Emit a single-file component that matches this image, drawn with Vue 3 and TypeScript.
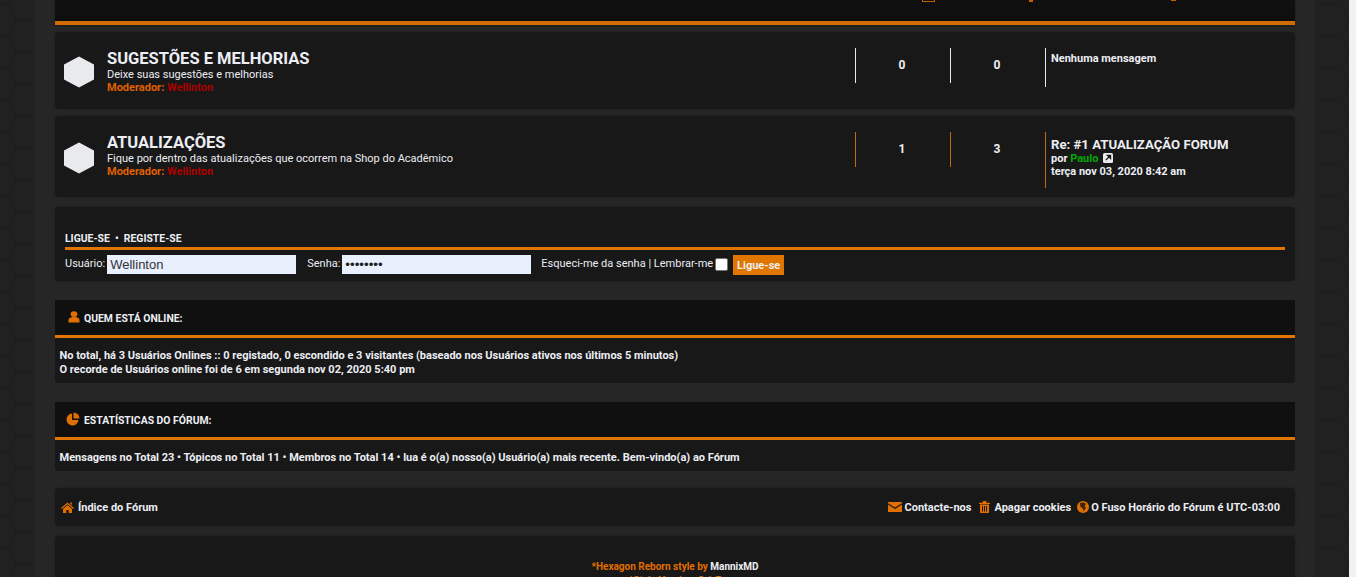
<script setup lang="ts">
const hexTile = "url(\"data:image/svg+xml,%3Csvg xmlns='http://www.w3.org/2000/svg' width='55.56' height='32' viewBox='0 0 55.56 32'%3E%3Cpath d='M16 20.5 H36 M36 20.5 L44 4.5 M36 20.5 L44 36.5 M36 -11.5 L44 4.5 M44 4.5 H56 M0 4.5 H8.44 M8.44 4.5 L16 20.5 M8.44 36.5 L16 20.5 M8.44 4.5 L16 -11.5' fill='none' stroke='%231c1c1c' stroke-width='1'/%3E%3C/svg%3E\")";
const forums = [
  {
    title: "SUGESTÕES E MELHORIAS",
    desc: "Deixe suas sugestões e melhorias",
    topics: "0",
    posts: "0",
    accent: false,
  },
  {
    title: "ATUALIZAÇÕES",
    desc: "Fique por dentro das atualizações que ocorrem na Shop do Acadêmico",
    topics: "1",
    posts: "3",
    accent: true,
  },
];
</script>

<template>
  <div class="page">
    <div class="bg" :style="{ backgroundImage: hexTile }">
      <div class="wrap">
        <div class="topbar">
          <span class="peek p1"></span>
          <span class="peek p2"></span>
          <span class="peek p3"></span>
        </div>

        <div
          v-for="f in forums"
          :key="f.title"
          class="panel forum"
          :class="{ tall: f.accent }"
        >
          <svg class="hex" width="32" height="32" viewBox="0 0 32 32">
            <path d="M16 0.5 L31 8.5 V23.5 L16 31.5 L1 23.5 V8.5 Z" fill="#e9eaee" />
          </svg>
          <div class="info">
            <div class="ftitle">{{ f.title }}</div>
            <div class="fdesc">{{ f.desc }}</div>
            <div class="fmod"><b>Moderador:</b> <b class="red">Wellinton</b></div>
          </div>
          <div class="stat" :class="{ accent: f.accent }">{{ f.topics }}</div>
          <div class="stat" :class="{ accent: f.accent }">{{ f.posts }}</div>
          <div class="last" :class="{ accent: f.accent }">
            <template v-if="f.accent">
              <div class="ltitle">Re: #1 ATUALIZAÇÃO FORUM</div>
              <div class="lline">
                por <span class="green">Paulo</span>
                <svg class="ext" width="10" height="10" viewBox="0 0 10 10">
                  <rect width="10" height="10" rx="1.5" fill="#e9eaee" />
                  <path d="M2.8 7.2 L6 4 M4.4 2.4 H7.6 V5.6 Z" stroke="#181818" stroke-width="1.2" fill="#181818" />
                </svg>
              </div>
              <div class="lline">terça nov 03, 2020 8:42 am</div>
            </template>
            <div v-else class="lnone">Nenhuma mensagem</div>
          </div>
        </div>

        <div class="panel login">
          <div class="lhead">LIGUE-SE &nbsp;•&nbsp; REGISTE-SE</div>
          <div class="lform">
            <label class="flabel">Usuário:</label>
            <input class="inp" type="text" value="Wellinton" />
            <label class="flabel second">Senha:</label>
            <input class="inp pw" type="password" value="12345678" />
            <span class="flabel links">Esqueci-me da senha | Lembrar-me</span>
            <span class="check"></span>
            <button class="btn" type="button">Ligue-se</button>
          </div>
        </div>

        <div class="sect online">
          <div class="shead">
            <svg class="sicon user" width="12" height="12" viewBox="0 0 12 14" preserveAspectRatio="none">
              <circle cx="6" cy="3.6" r="3.4" fill="#e06e00" />
              <path d="M0.5 13.5 V10.5 C0.5 8.5 2.5 7.5 4 7 H8 C9.5 7.5 11.5 8.5 11.5 10.5 V13.5 Z" fill="#e06e00" />
            </svg>
            <span>QUEM ESTÁ ONLINE:</span>
          </div>
          <div class="sbody">
            <div>No total, há 3 Usuários Onlines :: 0 registado, 0 escondido e 3 visitantes (baseado nos Usuários ativos nos últimos 5 minutos)</div>
            <div>O recorde de Usuários online foi de 6 em segunda nov 02, 2020 5:40 pm</div>
          </div>
        </div>

        <div class="sect stats">
          <div class="shead wide">
            <svg class="sicon pie" width="14" height="14" viewBox="0 0 14 14">
              <path d="M6 1.5 A6 6 0 1 0 12.5 8 H6 Z" fill="#e06e00" />
              <path d="M7.5 0.5 A6 6 0 0 1 13.5 6.5 H7.5 Z" fill="#e06e00" />
            </svg>
            <span>ESTATÍSTICAS DO FÓRUM:</span>
          </div>
          <div class="sbody one">Mensagens no Total 23 • Tópicos no Total 11 • Membros no Total 14 • lua é o(a) nosso(a) Usuário(a) mais recente. Bem-vindo(a) ao Fórum</div>
        </div>

        <div class="panel nav">
          <div class="navitem first">
            <svg width="13" height="11" viewBox="0 0 13 11">
              <path d="M9.2 0.6 H10.9 V3.2 L9.2 1.8 Z" fill="#e06e00" />
              <path d="M6.5 0.5 L13 6 L12.2 6.9 L6.5 2.2 L0.8 6.9 L0 6 Z" fill="#e06e00" />
              <path d="M2 7 L6.5 3.2 L11 7 V11 H7.7 V8 H5.3 V11 H2 Z" fill="#e06e00" />
            </svg>
            <span>Índice do Fórum</span>
          </div>
          <div class="navright">
            <div class="navitem">
              <svg width="14" height="10" viewBox="0 0 14 10">
                <path d="M0 0 H14 V1.2 L7 5.6 L0 1.2 Z" fill="#e06e00" />
                <path d="M0 2.4 L7 6.9 L14 2.4 V10 H0 Z" fill="#e06e00" />
              </svg>
              <span>Contacte-nos</span>
            </div>
            <div class="navitem trash">
              <svg width="11" height="12" viewBox="0 0 11 12">
                <path d="M0 1.8 H3.4 L4 0 H7 L7.6 1.8 H11 V3 H0 Z" fill="#e06e00" />
                <path d="M1 3.6 H10 V12 H1 Z M3 5 V10.6 H4 V5 Z M5 5 V10.6 H6 V5 Z M7 5 V10.6 H8 V5 Z" fill="#e06e00" fill-rule="evenodd" />
              </svg>
              <span>Apagar cookies</span>
            </div>
            <div class="navitem tz">
              <svg width="12" height="12" viewBox="0 0 12 12">
                <circle cx="6" cy="6" r="6" fill="#e06e00" />
                <path d="M3 2 L7 1.5 L9 3 L7.5 5 L9 7 L6.5 10 L5.5 7 L3.5 6 Z" fill="#3a2410" />
              </svg>
              <span>O Fuso Horário do Fórum é UTC-03:00</span>
            </div>
          </div>
        </div>

        <div class="panel foot">
          <div class="fline"><span class="or">*Hexagon Reborn style by</span> MannixMD</div>
          <div class="fline or">*Style Version: 3.1.7</div>
        </div>
      </div>
    </div>
    <div class="scroll"></div>
  </div>
</template>

<style>
html, body {
  margin: 0;
  height: 100%;
  overflow: hidden;
}
</style>

<style scoped>
.page {
  display: flex;
  width: 1356px;
  height: 577px;
  overflow: hidden;
  font-family: Roboto, "Liberation Sans", sans-serif;
  font-size: 11px;
  color: #eceef4;
}
.bg {
  width: 1349px;
  height: 577px;
  flex: none;
  background-color: #212121;
  background-size: 55.56px 32px;
  background-repeat: repeat;
}
.scroll {
  width: 7px;
  flex: none;
  background: #f1f1f1;
}
.wrap {
  width: 1240px;
  height: 577px;
  margin-left: 35px;
  padding: 0 20px;
  background: #262626;
  overflow: hidden;
}
.topbar {
  position: relative;
  height: 21px;
  background: linear-gradient(#101010, #0e0e0e);
  border-bottom: 4px solid;
  border-image: linear-gradient(#9a5000 0, #9a5000 25%, #d06c00 25%) 1;
  margin-bottom: 7px;
  box-shadow: 0 1px 2px #1b1b1b;
}
.peek {
  position: absolute;
  top: 0;
  height: 3px;
  background: #c75f00;
}
.p1 {
  left: 867px;
  width: 13px;
  height: 2px;
  background: none;
  border: 1px solid #c75f00;
  border-top: 0;
  box-sizing: border-box;
}
.p2 {
  left: 974px;
  width: 4px;
  height: 2px;
}
.p3 {
  left: 1116px;
  width: 5px;
  height: 1px;
}
.panel {
  background: #181818;
  border-radius: 4px;
  box-shadow: 0 0 3px #1e1e1e;
}
.forum {
  display: flex;
  height: 77px;
  margin-bottom: 7px;
  box-sizing: border-box;
  padding: 16px 10px 0 8px;
  position: relative;
}
.forum.tall {
  height: 81px;
  margin-bottom: 10px;
}
.hex {
  flex: none;
  margin-top: 8px;
  margin-right: 12px;
}
.forum.tall .hex {
  margin-top: 10px;
}
.info {
  width: 748px;
  flex: none;
  margin-top: 1px;
  line-height: 13px;
}
.ftitle {
  font-size: 16.5px;
  font-weight: 700;
  line-height: 19px;
}
.fdesc {
  font-size: 11px;
  line-height: 13px;
}
.fmod {
  color: #e06000;
  line-height: 13px;
}
.fmod b {
  font-weight: 700;
}
.red {
  color: #aa0000;
}
.stat {
  width: 95px;
  flex: none;
  height: 35px;
  box-sizing: border-box;
  border-left: 1px solid #e9eaee;
  padding-right: 2px;
  text-align: center;
  font-size: 12px;
  font-weight: 700;
  line-height: 35px;
}
.stat.accent {
  border-left-color: #c06a10;
}
.last {
  flex: 1;
  height: 35px;
  border-left: 1px solid #e9eaee;
  padding: 4px 0 0 5px;
  font-weight: 700;
}
.last.accent {
  height: 50px;
  padding-top: 6px;
  border-left-color: #c06a10;
}
.lnone {
  font-size: 11px;
  line-height: 13px;
}
.ltitle {
  font-size: 13.2px;
  line-height: 14px;
  font-weight: 700;
}
.lline {
  line-height: 13px;
}
.green {
  color: #00aa00;
}
.ext {
  margin-left: 5px;
  vertical-align: -1px;
}
.login {
  height: 74px;
  box-sizing: border-box;
  padding: 25px 10px 0;
  margin-bottom: 19px;
}
.lhead {
  font-size: 10.4px;
  font-weight: 700;
  line-height: 13px;
  padding-bottom: 2px;
  border-bottom: 3px solid #e07600;
}
.lform {
  display: flex;
  align-items: flex-start;
  margin-top: 5px;
}
.flabel {
  line-height: 18px;
  margin-right: 2px;
  white-space: nowrap;
}
.second {
  margin-left: 11px;
}
.inp {
  width: 189px;
  height: 19px;
  box-sizing: border-box;
  border: 0;
  padding: 0 3px;
  background: #e8f0fe;
  color: #333;
  font-family: "Liberation Sans", sans-serif;
  font-size: 13px;
  outline: 0;
}
.pw {
  color: #222;
  font-size: 13.33px;
}
.links {
  margin-left: 10px;
}
.check {
  width: 11px;
  height: 11px;
  margin: 3px 0 0 0;
  background: #fff;
  border: 1px solid #767676;
  border-radius: 2px;
}
.btn {
  width: 51px;
  height: 20px;
  margin-left: 5px;
  border: 0;
  padding: 0;
  background: #e07600;
  color: #efefef;
  font-family: Roboto, sans-serif;
  font-size: 11px;
  font-weight: 700;
}
.sect {
  margin-bottom: 19px;
}
.shead {
  display: flex;
  align-items: center;
  height: 34px;
  padding-top: 1px;
  background: #101010;
  border-bottom: 3px solid #e07600;
  font-size: 10.4px;
  font-weight: 700;
  padding-left: 13px;
}
.shead.wide {
  padding-left: 11px;
}
.pie {
  margin-top: -2px;
}
.user {
  margin-top: -2px;
}
.sicon {
  margin-right: 4px;
}
.sbody {
  background: #181818;
  border-radius: 0 0 4px 4px;
  padding: 11px 5px 6px 4.5px;
  height: 28px;
  line-height: 14px;
  font-weight: 700;
  font-size: 11px;
}
.sbody.one {
  height: 14px;
}
.nav {
  display: flex;
  justify-content: space-between;
  align-items: center;
  height: 38px;
  padding: 0 15px 0 6px;
  margin-top: -2px;
  margin-bottom: 10px;
  font-weight: 700;
}
.navright {
  display: flex;
}
.navitem {
  display: flex;
  align-items: center;
  gap: 3px;
  white-space: nowrap;
}
.navitem.first {
  gap: 4px;
}
.navitem.trash {
  gap: 4px;
  margin-left: 8px;
}
.navitem.tz {
  gap: 2px;
  margin-left: 6px;
}
.foot {
  height: 60px;
  padding-top: 24px;
  text-align: center;
  font-size: 10px;
  font-weight: 700;
  line-height: 14px;
  box-sizing: border-box;
}
.or {
  color: #e06e00;
}
</style>
